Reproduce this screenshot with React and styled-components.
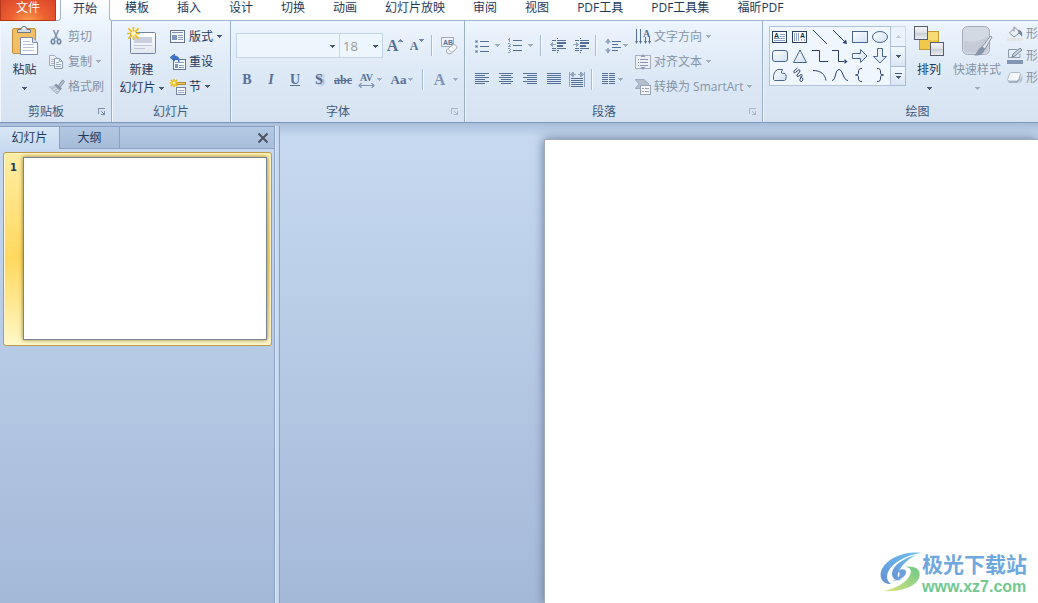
import React from "react";
import styled, { createGlobalStyle, css } from "styled-components";

const GlobalStyle = createGlobalStyle`
  :root {
    --ink: #1e395b;
    --ink-muted: #8593a6;
    --ink-label: #3e587c;
    --line: #8aa1c3;
    --glyph: #566f96;
    --text: 12px;
  }

  * {
    box-sizing: border-box;
  }

  body {
    margin: 0;
    overflow: hidden;
    font-family: "Open Sans", "Noto Sans CJK SC", sans-serif;
    font-size: var(--text);
    line-height: 18px;
    color: var(--ink);
  }

  button, select {
    font: inherit;
    color: inherit;
    margin: 0;
    padding: 0;
    border: none;
    background: transparent;
  }

  svg {
    display: block;
    flex: none;
  }
`;

const StyledApp = styled.div`
  position: relative;
  display: flex;
  flex-direction: column;
  height: 100vh;
  overflow: hidden;
`;

/* ---------- tabs ---------- */

const StyledTabBar = styled.nav`
  display: flex;
  flex: none;
  height: 21px;
  background-color: #ffffff;
`;

const StyledTab = styled.button`
  flex: none;
  padding: 0 14px 4px;
  line-height: 16px;
  white-space: nowrap;
`;

const StyledFileTab = styled(StyledTab)`
  width: 56px;
  color: #ffffff;
  border: solid #b5391c;
  border-width: 0 1px 1px;
  background: radial-gradient(
    ellipse at 50% 110%,
    #ffa050 0%,
    #ee6331 45%,
    #d9432a 100%
  );
`;

const StyledTabCorner = styled.div`
  flex: none;
  width: 5px;
  border: solid #a3b6d0;
  border-width: 0 1px 1px 0;
  border-bottom-right-radius: 3px;
`;

const StyledActiveTab = styled(StyledTab)`
  width: 48px;
  padding-inline: 0;
  background: linear-gradient(#ffffff, #eef5fd);
`;

const StyledTabList = styled.div`
  display: flex;
  flex: 1;
  min-width: 0;
  padding-left: 1px;
  border: solid #a3b6d0;
  border-width: 0 0 1px 1px;
  border-bottom-left-radius: 3px;
`;

/* ---------- ribbon ---------- */

const StyledRibbon = styled.header`
  display: flex;
  flex: none;
  overflow: hidden;
  border-bottom: 1px solid #7d95b8;
  background: linear-gradient(#edf5fd 0%, #dfeaf7 45%, #d7e3f2 100%);
`;

const StyledGroup = styled.section`
  display: flex;
  flex-direction: column;
  flex: none;
  width: ${({ $width }) => $width}px;
  border-right: 1px solid #97adca;
  box-shadow: inset 1px 0 #f1f7fd;
`;

const StyledGroupBody = styled.div`
  display: flex;
  height: 80px;
  padding-left: ${({ $pad = 0 }) => $pad}px;
`;

const StyledGroupFooter = styled.div`
  display: flex;
  height: 21px;
  line-height: 22px;
  color: var(--ink-label);

  h2 {
    flex: 1;
    margin: 0;
    font-size: var(--text);
    font-weight: 400;
    text-align: center;
  }

  button {
    display: flex;
    align-items: center;
    justify-content: center;
    width: 19px;
  }
`;

const StyledBigButton = styled.button`
  display: flex;
  flex-direction: column;
  align-items: center;
  flex: none;
  width: ${({ $width }) => $width}px;
  padding-top: 4px;
  white-space: nowrap;

  &:disabled {
    color: var(--ink-muted);
  }
`;

const StyledBigIcon = styled.span`
  display: flex;
  align-items: flex-start;
  height: 36px;
`;

const StyledBigLine = styled.span`
  display: flex;
  align-items: center;
  gap: 3px;
  height: 18px;
`;

const StyledButtonColumn = styled.div`
  display: flex;
  flex-direction: column;
  align-items: flex-start;
  padding-top: ${({ $dense }) => ($dense ? 2 : 3)}px;
  padding-left: ${({ $gap = 0 }) => $gap}px;

  & > button {
    height: ${({ $dense }) => ($dense ? 22 : 25)}px;
  }
`;

const StyledSmallButton = styled.button`
  display: flex;
  align-items: center;
  gap: 3px;
  white-space: nowrap;

  span {
    padding-right: 1px;
  }

  &:disabled {
    color: var(--ink-muted);
  }
`;

const StyledRows = styled.div`
  display: flex;
  flex-direction: column;
  gap: 9px;
  padding-top: 12px;
`;

const StyledRow = styled.div`
  display: flex;
  align-items: center;
  height: 25px;
`;

const StyledToolButton = styled.button`
  display: flex;
  align-items: center;
  justify-content: center;
  gap: ${({ $gap = 3 }) => $gap}px;
  flex: none;
  width: ${({ $width = 24 }) => $width}px;
  height: 22px;
  color: var(--glyph);
`;

const StyledDivider = styled.span`
  flex: none;
  width: 2px;
  height: 21px;
  margin: 0 4px 0 ${({ $left = 3 }) => $left}px;
  border-left: 1px solid #a9b9cf;
  border-right: 1px solid #f4f9fe;
`;

const StyledGlyph = styled.span`
  font-family: "Liberation Serif", serif;
  font-size: ${({ $size = 14 }) => $size}px;
  font-weight: 700;
  line-height: 16px;
  ${({ $italic }) => $italic && css`font-style: italic;`}
  ${({ $line }) => $line && css`text-decoration: ${$line};`}
  ${({ $shadow }) => $shadow && css`text-shadow: 2px 1px 2px #8fa3c0;`}
  ${({ $muted }) => $muted && css`color: #8093b1;`}
`;

const StyledStack = styled.span`
  display: flex;
  flex-direction: column;
  align-items: center;

  ${StyledGlyph} {
    line-height: 11px;
  }
`;

const StyledCombos = styled.div`
  display: flex;
  margin: 0 1px;
`;

const StyledCombo = styled.div`
  position: relative;
  width: ${({ $width }) => $width}px;
  height: 25px;
  border: 1px solid #c3d3e8;
  background-color: #edf5fd;

  & + & {
    border-left: none;
  }

  select {
    width: 100%;
    height: 100%;
    padding-left: 3px;
    appearance: none;
    font-size: 13px;
    color: #9c9c9c;
    opacity: 1;
  }

  svg {
    position: absolute;
    right: 4px;
    top: 11px;
    pointer-events: none;
  }
`;

const StyledGallery = styled.div`
  display: grid;
  grid-template-columns: repeat(6, 20px);
  grid-template-rows: repeat(3, 1fr);
  flex: none;
  width: 122px;
  height: 60px;
  margin-top: 5px;
  border: 1px solid #b1c2d9;
  background-color: #eff6fd;

  button {
    display: flex;
    align-items: center;
    justify-content: center;
  }
`;

const StyledGalleryScroll = styled.div`
  display: grid;
  grid-template-rows: repeat(3, 1fr);
  flex: none;
  width: 15px;
  height: 60px;
  margin-top: 5px;

  button {
    display: flex;
    align-items: center;
    justify-content: center;
    border: solid #a8bbd5;
    border-width: 1px 1px 0 0;
    background: linear-gradient(#f2f8fe, #dae6f4);
  }

  button:last-child {
    border-bottom-width: 1px;
  }

  button:disabled {
    border-color: #ccdaeb;
    background: #eaf2fb;
  }
`;

/* ---------- workspace ---------- */

const StyledWorkspace = styled.main`
  display: flex;
  flex: 1;
  min-height: 0;
  padding-top: 3px;
  background: linear-gradient(#a9bedb 0, #c6d9f0 14px, #c3d6ee 60px, #a4b9d8 100%);
`;

const StyledPane = styled.aside`
  flex: none;
  width: 275px;
  border: solid var(--line);
  border-width: 1px 1px 0 0;
`;

const StyledPaneTabs = styled.div`
  display: flex;
  height: 22px;
`;

const StyledPaneTab = styled.button`
  width: ${({ $active }) => ($active ? 59 : 61)}px;
  line-height: 20px;
  ${({ $active }) =>
    $active
      ? css`
          background: linear-gradient(#d8e6f6, #c8daf0);
        `
      : css`
          border: solid var(--line);
          border-width: 0 1px 1px;
          background: linear-gradient(#b3c8e2, #a5bbd8);
        `}
`;

const StyledPaneFill = styled.div`
  display: flex;
  justify-content: flex-end;
  flex: 1;
  padding-right: 5px;
  border-bottom: 1px solid var(--line);
  background: linear-gradient(#b3c8e2, #a8bedb);
`;

const StyledSlideItem = styled.button`
  display: grid;
  grid-template-columns: 19px 1fr;
  align-items: start;
  width: 269px;
  margin: 3px 2px 0 3px;
  padding: 4px 4px 5px 0;
  border: 1px solid #bf9a45;
  border-radius: 3px;
  background: linear-gradient(#ffeda4 0%, #ffd95f 55%, #ffe68a 75%, #fdf8c8 100%);
  box-shadow: inset 0 0 0 1px #fff6cf;

  span {
    font-family: "DejaVu Sans", sans-serif;
    font-size: 10px;
    font-weight: 700;
    line-height: 22px;
  }
`;

const StyledThumb = styled.div`
  width: 100%;
  aspect-ratio: 4 / 3;
  border: 1px solid #7c8494;
  background-color: #ffffff;
  box-shadow: 0 0 4px #8c7a3a;
`;

const StyledSplitter = styled.div`
  flex: none;
  width: 5px;
  border-right: 1px solid var(--line);
  background-color: #c5d8ee;
  box-shadow: inset 1px 0 #dce9f8;
`;

const StyledCanvas = styled.div`
  display: flex;
  flex: 1;
  min-width: 0;
  padding: 13px 0 0 264px;
`;

const StyledSlide = styled.div`
  flex: 1;
  border: solid #a3a9b3;
  border-width: 1px 0 0 1px;
  background-color: #ffffff;
  box-shadow: 0 0 10px #5f7596;
`;

const StyledWatermark = styled.div`
  position: absolute;
  right: 11px;
  bottom: 7px;
  display: flex;
  align-items: center;

  p {
    margin: 0;
    font-family: "Noto Sans CJK SC", sans-serif;
    font-size: 21px;
    font-weight: 700;
    line-height: 30px;
    color: #6fa8de;
  }

  a {
    display: block;
    font-family: "Liberation Sans", sans-serif;
    font-size: 16px;
    font-weight: 700;
    line-height: 18px;
    color: #70c890;
    text-decoration: none;
  }
`;

/* ---------- icons ---------- */

const Icon = ({ w = 16, h = 16, crisp, children }) => (
  <svg
    width={w}
    height={h}
    viewBox={`0 0 ${w} ${h}`}
    fill="none"
    shapeRendering={crisp ? "crispEdges" : "auto"}
    aria-hidden="true"
  >
    {children}
  </svg>
);

const Arrow = ({ muted }) => (
  <Icon w={5} h={3} crisp>
    <path d="M0 0h5v1h-1v1h-1v1h-1v-1h-1v-1h-1z" fill={muted ? "#a0aec2" : "#4a5a76"} />
  </Icon>
);

const LauncherIcon = ({ muted }) => (
  <Icon w={8} h={8} crisp>
    <path d="M.5 6V.5h6" stroke={muted ? "#a9b6c8" : "#7e8ea6"} />
    <path d="M3 3h1v1h1v1h1v-2h1v4h-4v-1h2v-1h-1v-1h-1z" fill={muted ? "#a9b6c8" : "#7e8ea6"} />
  </Icon>
);

const PasteIcon = () => (
  <Icon w={28} h={32}>
    <rect x="1.500" y="3.500" width="23" height="25" rx="1.500" fill="#f2bf62" stroke="#c08f3d" />
    <path d="M6.500 7.500v-3h3.500c0-4 6-4 6 0h3.500v3z" fill="#d5d9df" stroke="#6d7684" />
    <circle cx="13" cy="3.500" r="1.200" fill="#fff" />
    <path d="M9.500 12.500h12l5 5v12h-17z" fill="#fbfcfe" stroke="#7c8ba4" />
    <path d="M21.500 12.500v5h5" fill="#dbe3ee" stroke="#7c8ba4" />
    <path d="M12 16.500h7M12 19.500h11M12 22.500h11M12 25.500h11" stroke="#b7c2d6" />
  </Icon>
);

const CutIcon = () => (
  <Icon>
    <path d="M4.500 1l4 9M9.500 1l-4 9" stroke="#8495ad" strokeWidth="1.600" />
    <ellipse cx="4" cy="12.500" rx="1.700" ry="2.300" stroke="#7388a6" strokeWidth="1.600" />
    <ellipse cx="10" cy="12.500" rx="1.700" ry="2.300" stroke="#7388a6" strokeWidth="1.600" />
  </Icon>
);

const CopyIcon = () => (
  <Icon>
    <path d="M.5 1.500h5l3 3v7h-8z" fill="#edf2f8" stroke="#9dabc0" />
    <path d="M2 5.500h4M2 7.500h4M2 9.500h4" stroke="#a9b6c8" />
    <path d="M5.500 4.500h5l3 3v7h-8z" fill="#f3f6fa" stroke="#8e9db4" />
    <path d="M10.500 4.500v3h3M7 8.500h3M7 10.500h5M7 12.500h5" stroke="#9dabc0" />
  </Icon>
);

const BrushIcon = () => (
  <Icon>
    <path d="M9.500 6.500l4-5.500 2 1.500-4 5.500z" fill="#b1bccb" stroke="#8795aa" />
    <path d="M7 4.500l6 5-2 2-6-5z" fill="#8795aa" />
    <path d="M5 6.500l6 5-3 3.500L0.500 8c2 .5 3.500-.2 4.500-1.500z" fill="#d5dbe4" stroke="#a5b1c2" />
    <path d="M3 9.500l3-1M5 11.500l3-1M7 13l2.500-1" stroke="#a5b1c2" />
  </Icon>
);

const Sparkle = ({ x, y, r }) => (
  <g transform={`translate(${x} ${y})`}>
    <path
      d={`M0 ${-r}V${r}M${-r} 0H${r}M${-r * 0.8} ${-r * 0.8}L${r * 0.8} ${r * 0.8}M${r * 0.8} ${-r * 0.8}L${-r * 0.8} ${r * 0.8}`}
      stroke="#f0bd1c"
      strokeWidth="1.700"
    />
    <circle r={r * 0.35} fill="#fff7c0" />
  </g>
);

const NewSlideIcon = () => (
  <Icon w={30} h={32}>
    <defs>
      <linearGradient id="newSlide" x1="0" y1="0" x2="0" y2="1">
        <stop offset="0" stopColor="#ffffff" />
        <stop offset="1" stopColor="#e1e6ee" />
      </linearGradient>
    </defs>
    <rect x="3.500" y="7.500" width="25" height="21" rx="1" fill="url(#newSlide)" stroke="#7383a0" />
    <rect x="7" y="12" width="18" height="6" fill="#c9cfdc" />
    <path d="M7 20.500h18M7 23.500h11" stroke="#c0c8d8" />
    <Sparkle x={6.500} y={8.500} r={6.500} />
  </Icon>
);

const LayoutIcon = () => (
  <Icon crisp>
    <rect x="0.500" y="1.500" width="14" height="12" fill="#f5f8fc" stroke="#64748f" />
    <path d="M2 3.500h11" stroke="#7a90b4" />
    <rect x="2" y="6" width="5" height="5" fill="#8096ba" />
    <path d="M8 6.500h5M8 8.500h5M8 10.500h5" stroke="#8c9fbe" />
  </Icon>
);

const ResetIcon = () => (
  <Icon>
    <rect x="3.500" y="5.500" width="12" height="10" fill="#f5f8fc" stroke="#64748f" />
    <path d="M5 8.500h9M9 11.500h5M9 13.500h5" stroke="#8c9fbe" />
    <rect x="5" y="10" width="3" height="4" fill="#8096ba" />
    <path d="M0 3.500L4.500 0v2C8 2 9.500 4 9 8 8 5.500 7 5 4.500 5v2z" fill="#3d74cc" stroke="#2959a6" strokeWidth=".6" />
  </Icon>
);

const SectionIcon = () => (
  <Icon>
    <rect x="6.500" y="3.500" width="9" height="2" fill="#f2c44e" stroke="#b38f3d" />
    <rect x="6.500" y="8.500" width="9" height="7" fill="#f7f9fc" stroke="#7383a0" />
    <path d="M8 11.500h6M8 13.500h6" stroke="#9aa9c2" />
    <Sparkle x={4} y={4} r={4} />
  </Icon>
);

const ClearFormatIcon = () => (
  <Icon w={18} h={18}>
    <rect x="1.500" y="0.500" width="12" height="9" fill="#eef3fa" stroke="#9cacc5" />
    <text x="3" y="8" fontSize="7" fontWeight="700" fontFamily="Liberation Sans, sans-serif" fill="#566f96">
      AB
    </text>
    <path d="M6.500 13l6-5c3-1 5 1 4 3.500l-5.500 5c-3 1-5-.5-4.500-3.500z" fill="#f6f8fa" stroke="#a7acb5" />
    <path d="M8.500 11.500c.5 2 2 3.500 4.500 3.500" stroke="#b9bec7" />
  </Icon>
);

const SpacingArrows = () => (
  <Icon w={17} h={5}>
    <path d="M1 2.500h15M3.500 0L1 2.500 3.500 5M13.500 0L16 2.500 13.500 5" stroke="#7f94b4" strokeWidth="1.200" />
  </Icon>
);

const GrowMark = ({ down }) => (
  <Icon w={5} h={14} crisp>
    {down ? (
      <path d="M0 0h5v1h-1v1h-1v1h-1v-1h-1v-1h-1z" fill="#7389ad" />
    ) : (
      <path d="M2 0h1v1h1v1h1v1h-5v-1h1v-1h1z" fill="#7389ad" />
    )}
  </Icon>
);

const BulletIcon = () => (
  <Icon w={14} h={14} crisp>
    <path d="M5 2.500h9M5 7.500h9M5 12.500h9" stroke="#566f96" />
    <path d="M0 1h3v3h-3zM0 6h3v3h-3zM0 11h3v3h-3z" fill="#a3b2ca" />
    <path d="M1 2h1v1h-1zM1 7h1v1h-1zM1 12h1v1h-1z" fill="#566f96" />
  </Icon>
);

const NumberIcon = () => (
  <Icon w={14} h={15} crisp>
    <path d="M5 2.500h9M5 7.500h9M5 12.500h9" stroke="#566f96" />
    <path
      d="M1.500 0v4M0 1.500h1M0 5.500h2M2.500 6v1M1.500 7v1M0 8.500h3M0 10.500h2M2.500 11v1M1 12.500h1M2.500 13v1M0 14.500h2"
      stroke="#8498b8"
    />
  </Icon>
);

const IndentIcon = ({ increase }) => (
  <Icon w={16} h={15} crisp>
    <path d="M2 2.500h4M7 2.500h9M2 10.500h4M7 10.500h9M2 12.500h4M7 12.500h2M7 .5h1M7 14.500h1" stroke="#566f96" />
    <path d="M7 4h9v2h-9zM7 7h6v2h-6z" fill="#566f96" />
    {increase ? (
      <path d="M0 6h3v-2h1v1h1v1h1v1h-1v1h-1v1h-1v-2h-3z" fill="#94a5c0" />
    ) : (
      <path d="M6 6h-3v-2h-1v1h-1v1h-1v1h1v1h1v1h1v-2h3z" fill="#94a5c0" />
    )}
  </Icon>
);

const LineSpacingIcon = () => (
  <Icon w={16} h={16}>
    <path d="M3 1v5M3 10v5" stroke="#8397b6" strokeWidth="1.400" />
    <path d="M0 4.500L3 0.500 6 4.500zM0 11.500l3 4 3-4z" fill="#8ea1bf" />
    <path d="M7 3.500h9M7 6.500h6M7 9.500h9M7 12.500h6" stroke="#566f96" shapeRendering="crispEdges" />
  </Icon>
);

const alignLines = {
  left: [[0, 14], [0, 10], [0, 14], [0, 10], [0, 14], [0, 10]],
  center: [[0, 14], [2, 12], [0, 14], [2, 12], [0, 14], [2, 12]],
  right: [[0, 14], [4, 14], [0, 14], [4, 14], [0, 14], [4, 14]],
  justify: [[0, 14], [0, 14], [0, 14], [0, 14], [0, 14], [0, 14]],
};

const AlignIcon = ({ kind }) => (
  <Icon w={14} h={14} crisp>
    {alignLines[kind].map(([from, to], i) => (
      <path key={i} d={`M${from} ${i * 2 + 0.5}H${to}`} stroke="#566f96" />
    ))}
  </Icon>
);

const DistributeIcon = () => (
  <Icon w={16} h={16} crisp>
    <path d="M.5 0v15M15.500 0v15" stroke="#94a5c0" />
    <path d="M1 2h1v-1h1v-1h2v2h2v1h-2v2h-2v-1h-1v-1h-1zM15 2h-1v-1h-1v-1h-2v2h-2v1h2v2h2v-1h1v-1h1z" fill="#94a5c0" />
    <path d="M2 6.500h12M2 8.500h12M2 10.500h12M2 12.500h12M2 14.500h12" stroke="#566f96" />
  </Icon>
);

const ColumnsIcon = () => (
  <Icon w={13} h={14} crisp>
    {[0, 2, 4, 6, 8, 10].map((y) => (
      <path key={y} d={`M0 ${y + 0.5}h6M7 ${y + 0.5}h6`} stroke="#566f96" />
    ))}
  </Icon>
);

const TextDirectionIcon = () => (
  <Icon>
    <path d="M1.500 0v14M5.500 0v14M10.500 8v6M14.500 8v6" stroke="#566f96" shapeRendering="crispEdges" />
    <path d="M0 12h3l-1.500 3zM4 12h3l-1.500 3zM9 12h3l-1.500 3zM13 12h3l-1.500 3z" fill="#566f96" />
    <text x="8" y="8" fontSize="10" fontWeight="700" fontFamily="Liberation Serif, serif" fill="#566f96">
      A
    </text>
  </Icon>
);

const AlignTextIcon = () => (
  <Icon>
    <rect x="0.500" y="1.500" width="15" height="13" fill="#eceff4" stroke="#a4afc0" />
    <path d="M3 5.500h1M5 5.500h8M3 8.500h1M5 8.500h8M3 11.500h1M5 11.500h8" stroke="#8a99b1" />
    <path d="M5.500 3L8 0l2.500 3zM5.500 13L8 16l2.500-3z" fill="#8fa0ba" />
  </Icon>
);

const SmartArtIcon = () => (
  <Icon>
    <path d="M0 .5h9l5 4.500-5 4.500H0L4 5z" fill="#b4becd" stroke="#96a3b7" strokeWidth=".8" />
    <rect x="5.500" y="6.500" width="10" height="9" fill="#f4f6f9" stroke="#98a4b6" />
    <path d="M7 9.500h2M10 9.500h4M7 12.500h2M10 12.500h4" stroke="#95a3b8" />
  </Icon>
);

const ArrangeIcon = () => (
  <Icon w={32} h={32}>
    <defs>
      <linearGradient id="arrange" x1="0" y1="0" x2="0" y2="1">
        <stop offset="0" stopColor="#f7f8fa" />
        <stop offset=".5" stopColor="#dcdfe4" />
        <stop offset=".5" stopColor="#c9cdd5" />
        <stop offset="1" stopColor="#eceef1" />
      </linearGradient>
    </defs>
    <rect x="6.500" y="6.500" width="19" height="18" fill="#f7dc75" stroke="#c29a34" />
    <path d="M7 15h18v9H7z" fill="#f1c94a" />
    <rect x="1.500" y="1.500" width="13" height="13" fill="url(#arrange)" stroke="#565e6d" />
    <rect x="17.500" y="17.500" width="13" height="13" fill="url(#arrange)" stroke="#565e6d" />
  </Icon>
);

const QuickStyleIcon = () => (
  <Icon w={32} h={32}>
    <rect x="1.500" y="1.500" width="27" height="28" rx="5" fill="#d3d9e2" stroke="#a4acb9" />
    <path d="M3 16c8 2 17 0 24-5v11c0 4-2 6-5 6H7c-3 0-4-2-4-5z" fill="#c5ccd7" />
    <path d="M29.500 11l1.500 1-7 12-3-2z" fill="#e4e8ee" stroke="#8b97a9" />
    <path d="M20.500 21.500l3.500 2.500c-2 6-6 7-11 6.500 3-2 4-7 7.500-9z" fill="#8795aa" />
  </Icon>
);

const FillIcon = () => (
  <Icon>
    <path d="M7 .5v5M2.500 7L8 1.500l5 5-6 4.500z" fill="#edf0f4" stroke="#8492a8" />
    <path d="M11 4c3 0 5 2 4 7-1-2-2-3-3.500-3.500z" fill="#73839c" />
    <path d="M0 12h16v3H0z" fill="#e3e4e5" />
  </Icon>
);

const OutlineIcon = () => (
  <Icon>
    <path d="M10 1.500H1.500v8H13V6" stroke="#8d9bb0" />
    <path d="M5 9l1-3 7-6 2 2-7 6z" fill="#c8d0db" stroke="#78879e" />
    <path d="M0 12h16v4H0z" fill="#8295b3" />
  </Icon>
);

const EffectIcon = () => (
  <Icon>
    <path d="M5 14l8-1c3-2 3-6 2-8l-3 8z" fill="#bac4d2" />
    <path d="M4 2.500h8.500l1 1-1.500 6-2 1.500H1.500L.5 9.500 2.500 4z" fill="#f5f7f9" stroke="#b1bac8" />
    <path d="M.5 9.500l1.500 3.500h8.500l2.500-3 .5-6.500-2 6-2 1.500H2z" fill="#a5b0c1" />
  </Icon>
);

const CloseIcon = () => (
  <Icon w={12} h={12}>
    <path d="M1.500 1.500l9 9M10.500 1.500l-9 9" stroke="#4b5262" strokeWidth="2" />
  </Icon>
);

const shapes = [
  {
    name: "文本框",
    art: (
      <>
        <rect x="0.500" y="2.500" width="14" height="11" fill="#fff" stroke="#2c3f63" />
        <text x="2" y="9" fontSize="7" fontWeight="700" fontFamily="Liberation Sans, sans-serif" fill="#1b2f55">
          A
        </text>
        <path d="M8 5.500h5M8 7.500h5M2 9.500h11M2 11.500h11" stroke="#8fa6c8" />
      </>
    ),
  },
  {
    name: "竖排文本框",
    art: (
      <>
        <rect x="0.500" y="2.500" width="14" height="11" fill="#fff" stroke="#2c3f63" />
        <text x="8" y="9" fontSize="7" fontWeight="700" fontFamily="Liberation Sans, sans-serif" fill="#1b2f55">
          A
        </text>
        <path d="M2.500 4v8M4.500 4v8M6.500 4v8M9.500 10v2M12.500 10v2" stroke="#8fa6c8" />
      </>
    ),
  },
  { name: "直线", art: <path d="M1 1l14 14" stroke="#2c3f6e" /> },
  {
    name: "箭头",
    art: (
      <>
        <path d="M1 1l12 12" stroke="#2c3f6e" />
        <path d="M15 15l-4.500-1 3.500-3.500z" fill="#2c3f6e" />
      </>
    ),
  },
  { name: "矩形", art: <rect x="0.500" y="2.500" width="15" height="11" fill="url(#shape)" stroke="#4a6591" /> },
  { name: "椭圆", art: <ellipse cx="8" cy="8" rx="7.500" ry="5.500" fill="url(#shape)" stroke="#4a6591" /> },
  { name: "圆角矩形", art: <rect x="0.500" y="2.500" width="15" height="11" rx="2.500" fill="url(#shape)" stroke="#4a6591" /> },
  { name: "三角形", art: <path d="M8 2l6.500 12.500h-13z" fill="url(#shape)" stroke="#4a6591" /> },
  { name: "肘形连接符", art: <path d="M0 2.500h7.500v11H16" stroke="#2c3f6e" /> },
  {
    name: "肘形箭头",
    art: (
      <>
        <path d="M0 2.500h6.500v11H12" stroke="#2c3f6e" />
        <path d="M15.500 13.500l-3 2.500v-5z" fill="#2c3f6e" />
      </>
    ),
  },
  { name: "右箭头", art: <path d="M.5 5.500h8v-4L15 8l-6.500 6.500v-4h-8z" fill="url(#shape)" stroke="#4a6591" /> },
  { name: "下箭头", art: <path d="M5.500 .5v8h-4L8 15l6.500-6.500h-4v-8z" fill="url(#shape)" stroke="#4a6591" /> },
  {
    name: "任意多边形",
    art: (
      <path
        d="M3 4.500L5.500 2.500h5c0 1.500-2 2-1 3.500 1 .8 2 0 3.500.5 1.500 1.500 1.500 4 .5 6.500l-1 .5h-10l-1-1v-4z"
        fill="url(#shape)"
        stroke="#4a6591"
      />
    ),
  },
  {
    name: "自由曲线",
    art: (
      <path
        d="M5.500 1L2 4c-1 1.500.5 2.500 2 1l2.500-2c1.500-.5 2 .5 1 2L5 8c-.5 1.500.5 2 2 1l2-1.500c1.500 0 1.500 1 .5 2.500l-1.500 2c-.5 2.500 1.500 3.500 2.500 1.500s0-3-2.500-3.500"
        stroke="#2c3f6e"
      />
    ),
  },
  { name: "弧形", art: <path d="M1 3.500c8 0 12 4 13 10" stroke="#2c3f6e" /> },
  { name: "曲线", art: <path d="M0 13.500c4 0 3-11 7-11s4 11 9 11" stroke="#2c3f6e" /> },
  { name: "左大括号", art: <path d="M10 1.500c-3 0-3.500 1-3.500 3.500S6 8 3.500 8C6 8 6.500 8.500 6.500 11s.5 3.500 3.500 3.500" stroke="#2c3f6e" /> },
  { name: "右大括号", art: <path d="M5 1.500c3 0 3.500 1 3.500 3.500S9 8 11.500 8C9 8 8.500 8.500 8.500 11s-.5 3.500-3.500 3.500" stroke="#2c3f6e" /> },
];

const SiteLogo = () => (
  <svg width="42" height="42" viewBox="0 0 42 42" fill="none" aria-hidden="true">
    <defs>
      <linearGradient id="swirlBlue" x1="1" y1="0" x2="0" y2="1">
        <stop offset="0" stopColor="#6cc4f0" />
        <stop offset="1" stopColor="#6590d2" />
      </linearGradient>
      <linearGradient id="swirlGreen" x1="1" y1="0" x2="0" y2="1">
        <stop offset="0" stopColor="#6cc88c" />
        <stop offset="1" stopColor="#d8e47a" />
      </linearGradient>
    </defs>
    <path d="M41 2C27 0 8 6 2 18c-4 9 1 15 9 15-4-3-5-7-3-12C12 12 26 4 41 2z" fill="url(#swirlBlue)" />
    <path d="M36 4C24 7 13 14 12 22c0 6 4 8 9 7-4-2-4-5-2-9 3-6 9-12 17-16z" fill="url(#swirlBlue)" />
    <path d="M25 16c5 0 7 3 5 8-3 7-13 13-26 16 14 1 29-3 34-11 5-9-2-15-13-13z" fill="url(#swirlGreen)" />
    <path d="M18 20c4-3 9-2 8 2s-6 7-13 8c5-2 9-7 5-10z" fill="#6f9fdb" />
  </svg>
);

/* ---------- parts ---------- */

const Group = ({ title, width, pad, launcher, muted, children }) => (
  <StyledGroup $width={width}>
    <StyledGroupBody $pad={pad}>{children}</StyledGroupBody>
    <StyledGroupFooter>
      <h2>{title}</h2>
      {launcher && (
        <button aria-label={launcher}>
          <LauncherIcon muted={muted} />
        </button>
      )}
    </StyledGroupFooter>
  </StyledGroup>
);

const SmallButton = ({ icon, label, menu, disabled }) => (
  <StyledSmallButton disabled={disabled}>
    {icon}
    <span>{label}</span>
    {menu && <Arrow muted={disabled} />}
  </StyledSmallButton>
);

const ToolButton = ({ label, menu, width, gap, children }) => (
  <StyledToolButton aria-label={label} $width={width} $gap={gap} disabled>
    {children}
    {menu && <Arrow muted />}
  </StyledToolButton>
);

const tabs = [
  "模板",
  "插入",
  "设计",
  "切换",
  "动画",
  "幻灯片放映",
  "审阅",
  "视图",
  "PDF工具",
  "PDF工具集",
  "福昕PDF",
];

const FontGroup = () => (
  <Group title="字体" width={234} pad={4} launcher="字体设置" muted>
    <StyledRows>
      <StyledRow>
        <StyledCombos>
          <StyledCombo $width={104}>
            <select aria-label="字体名称" defaultValue="">
              <option value=""></option>
            </select>
            <Arrow />
          </StyledCombo>
          <StyledCombo $width={43}>
            <select aria-label="字号" defaultValue="18">
              <option value="18">18</option>
            </select>
            <Arrow />
          </StyledCombo>
        </StyledCombos>
        <ToolButton label="增大字号" width={22} gap={0}>
          <StyledGlyph $size={16}>A</StyledGlyph>
          <GrowMark />
        </ToolButton>
        <ToolButton label="减小字号" width={22} gap={1}>
          <StyledGlyph $size={12}>A</StyledGlyph>
          <GrowMark down />
        </ToolButton>
        <StyledDivider />
        <ToolButton label="清除格式">
          <ClearFormatIcon />
        </ToolButton>
      </StyledRow>
      <StyledRow>
        <ToolButton label="加粗">
          <StyledGlyph>B</StyledGlyph>
        </ToolButton>
        <ToolButton label="倾斜">
          <StyledGlyph $italic>I</StyledGlyph>
        </ToolButton>
        <ToolButton label="下划线">
          <StyledGlyph $line="underline">U</StyledGlyph>
        </ToolButton>
        <ToolButton label="阴影">
          <StyledGlyph $shadow>S</StyledGlyph>
        </ToolButton>
        <ToolButton label="删除线">
          <StyledGlyph $size={12} $line="line-through">
            abc
          </StyledGlyph>
        </ToolButton>
        <ToolButton label="字符间距" menu width={30} gap={2}>
          <StyledStack>
            <StyledGlyph $size={10}>AV</StyledGlyph>
            <SpacingArrows />
          </StyledStack>
        </ToolButton>
        <ToolButton label="更改大小写" menu width={34} gap={2}>
          <StyledGlyph $size={13}>Aa</StyledGlyph>
        </ToolButton>
        <StyledDivider />
        <ToolButton label="字体颜色" menu width={36} gap={8}>
          <StyledGlyph $size={16} $muted>
            A
          </StyledGlyph>
        </ToolButton>
      </StyledRow>
    </StyledRows>
  </Group>
);

const ParagraphGroup = () => (
  <Group title="段落" width={298} pad={5} launcher="段落设置" muted>
    <StyledRows>
      <StyledRow>
        <ToolButton label="项目符号" menu width={34} gap={6}>
          <BulletIcon />
        </ToolButton>
        <ToolButton label="编号" menu width={32} gap={6}>
          <NumberIcon />
        </ToolButton>
        <StyledDivider $left={4} />
        <ToolButton label="减少缩进量">
          <IndentIcon />
        </ToolButton>
        <ToolButton label="增加缩进量" width={22}>
          <IndentIcon increase />
        </ToolButton>
        <StyledDivider />
        <ToolButton label="行距" menu width={30} gap={2}>
          <LineSpacingIcon />
        </ToolButton>
      </StyledRow>
      <StyledRow>
        <ToolButton label="左对齐">
          <AlignIcon kind="left" />
        </ToolButton>
        <ToolButton label="居中">
          <AlignIcon kind="center" />
        </ToolButton>
        <ToolButton label="右对齐">
          <AlignIcon kind="right" />
        </ToolButton>
        <ToolButton label="两端对齐">
          <AlignIcon kind="justify" />
        </ToolButton>
        <ToolButton label="分散对齐" width={22}>
          <DistributeIcon />
        </ToolButton>
        <StyledDivider />
        <ToolButton label="分栏" menu width={30}>
          <ColumnsIcon />
        </ToolButton>
      </StyledRow>
    </StyledRows>
    <StyledButtonColumn $gap={4}>
      <SmallButton icon={<TextDirectionIcon />} label="文字方向" menu disabled />
      <SmallButton icon={<AlignTextIcon />} label="对齐文本" menu disabled />
      <SmallButton icon={<SmartArtIcon />} label="转换为 SmartArt" menu disabled />
    </StyledButtonColumn>
  </Group>
);

const DrawingGroup = () => (
  <Group title="绘图" width={310} pad={6}>
    <StyledGallery>
      {shapes.map(({ name, art }) => (
        <button key={name} aria-label={name}>
          <Icon>
            <defs>
              <linearGradient id="shape" x1="0" y1="0" x2="1" y2="1">
                <stop offset="0" stopColor="#ffffff" />
                <stop offset="1" stopColor="#cfe0f3" />
              </linearGradient>
            </defs>
            {art}
          </Icon>
        </button>
      ))}
    </StyledGallery>
    <StyledGalleryScroll>
      <button aria-label="向上" disabled>
        <Icon w={5} h={3} crisp>
          <path d="M2 0h1v1h1v1h1v1h-5v-1h1v-1h1z" fill="#c3cfde" />
        </Icon>
      </button>
      <button aria-label="向下">
        <Arrow />
      </button>
      <button aria-label="其他">
        <Icon w={7} h={6} crisp>
          <path d="M0 0h7v1h-7zM1 3h5v1h-1v1h-1v1h-1v-1h-1v-1h-1z" fill="#4a5a76" />
        </Icon>
      </button>
    </StyledGalleryScroll>
    <StyledBigButton $width={46}>
      <StyledBigIcon>
        <ArrangeIcon />
      </StyledBigIcon>
      <StyledBigLine>排列</StyledBigLine>
      <StyledBigLine>
        <Arrow />
      </StyledBigLine>
    </StyledBigButton>
    <StyledBigButton $width={50} disabled>
      <StyledBigIcon>
        <QuickStyleIcon />
      </StyledBigIcon>
      <StyledBigLine>快速样式</StyledBigLine>
      <StyledBigLine>
        <Arrow muted />
      </StyledBigLine>
    </StyledBigButton>
    <StyledButtonColumn $dense $gap={5}>
      <SmallButton icon={<FillIcon />} label="形状填充" menu disabled />
      <SmallButton icon={<OutlineIcon />} label="形状轮廓" menu disabled />
      <SmallButton icon={<EffectIcon />} label="形状效果" menu disabled />
    </StyledButtonColumn>
  </Group>
);

const App = () => {
  return (
    <StyledApp>
      <GlobalStyle />
      <StyledTabBar>
        <StyledFileTab>文件</StyledFileTab>
        <StyledTabCorner />
        <StyledActiveTab>开始</StyledActiveTab>
        <StyledTabList>
          {tabs.map((tab) => (
            <StyledTab key={tab}>{tab}</StyledTab>
          ))}
        </StyledTabList>
      </StyledTabBar>

      <StyledRibbon>
        <Group title="剪贴板" width={112} launcher="剪贴板设置">
          <StyledBigButton $width={49}>
            <StyledBigIcon>
              <PasteIcon />
            </StyledBigIcon>
            <StyledBigLine>粘贴</StyledBigLine>
            <StyledBigLine>
              <Arrow />
            </StyledBigLine>
          </StyledBigButton>
          <StyledButtonColumn>
            <SmallButton icon={<CutIcon />} label="剪切" disabled />
            <SmallButton icon={<CopyIcon />} label="复制" menu disabled />
            <SmallButton icon={<BrushIcon />} label="格式刷" disabled />
          </StyledButtonColumn>
        </Group>
        <Group title="幻灯片" width={119} pad={4}>
          <StyledBigButton $width={51}>
            <StyledBigIcon>
              <NewSlideIcon />
            </StyledBigIcon>
            <StyledBigLine>新建</StyledBigLine>
            <StyledBigLine>
              幻灯片
              <Arrow />
            </StyledBigLine>
          </StyledBigButton>
          <StyledButtonColumn $gap={3}>
            <SmallButton icon={<LayoutIcon />} label="版式" menu />
            <SmallButton icon={<ResetIcon />} label="重设" />
            <SmallButton icon={<SectionIcon />} label="节" menu />
          </StyledButtonColumn>
        </Group>
        <FontGroup />
        <ParagraphGroup />
        <DrawingGroup />
      </StyledRibbon>

      <StyledWorkspace>
        <StyledPane>
          <StyledPaneTabs>
            <StyledPaneTab $active>幻灯片</StyledPaneTab>
            <StyledPaneTab>大纲</StyledPaneTab>
            <StyledPaneFill>
              <button aria-label="关闭">
                <CloseIcon />
              </button>
            </StyledPaneFill>
          </StyledPaneTabs>
          <StyledSlideItem>
            <span>1</span>
            <StyledThumb />
          </StyledSlideItem>
        </StyledPane>
        <StyledSplitter />
        <StyledCanvas>
          <StyledSlide />
        </StyledCanvas>
      </StyledWorkspace>

      <StyledWatermark>
        <SiteLogo />
        <div>
          <p>极光下载站</p>
          <a href="http://www.xz7.com">www.xz7.com</a>
        </div>
      </StyledWatermark>
    </StyledApp>
  );
};

export default App;
